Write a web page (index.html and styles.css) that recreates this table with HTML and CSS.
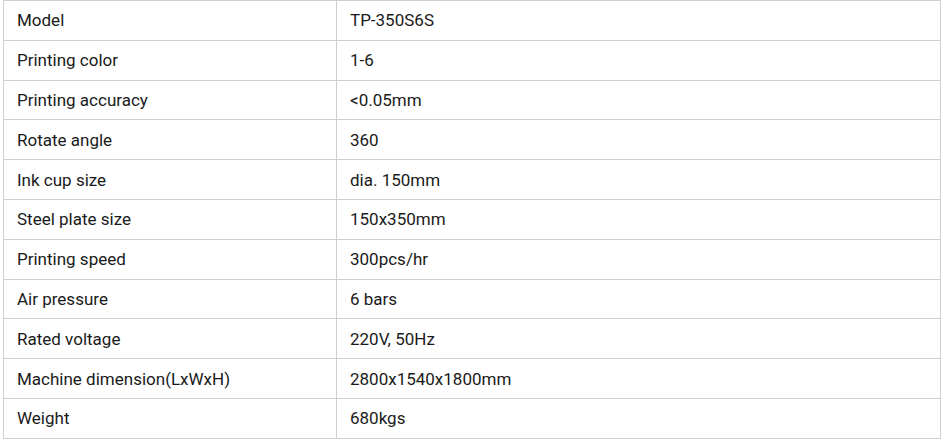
FILE: index.html
```html
<!DOCTYPE html>
<html>
<head>
<meta charset="utf-8">
<link rel="stylesheet" href="styles.css">
</head>
<body>
<table class="spec">
<tbody>
<tr><td class="k">Model</td><td class="v">TP-350S6S</td></tr>
<tr><td class="k">Printing color</td><td class="v">1-6</td></tr>
<tr><td class="k">Printing accuracy</td><td class="v">&lt;0.05mm</td></tr>
<tr><td class="k">Rotate angle</td><td class="v">360</td></tr>
<tr><td class="k">Ink cup size</td><td class="v">dia. 150mm</td></tr>
<tr><td class="k">Steel plate size</td><td class="v">150x350mm</td></tr>
<tr><td class="k">Printing speed</td><td class="v">300pcs/hr</td></tr>
<tr><td class="k">Air pressure</td><td class="v">6 bars</td></tr>
<tr><td class="k">Rated voltage</td><td class="v">220V, 50Hz</td></tr>
<tr><td class="k">Machine dimension(LxWxH)</td><td class="v">2800x1540x1800mm</td></tr>
<tr><td class="k">Weight</td><td class="v">680kgs</td></tr>
</tbody>
</table>
</body>
</html>
```
FILE: styles.css
```css
html, body {
  margin: 0;
  padding: 0;
  background: #fff;
}
body {
  padding-left: 3px;
  font-family: Roboto, "Liberation Sans", sans-serif;
  font-size: 17px;
  color: #1a1a1a;
}
.spec {
  border-collapse: collapse;
  width: 938px;
  table-layout: fixed;
}
.spec td {
  border: 1px solid #cfcfcf;
  height: 39.8px;
  padding: 0 0 0 13px;
  box-sizing: border-box;
  vertical-align: middle;
  line-height: 20px;
}
.spec .k {
  width: 333px;
}
```
